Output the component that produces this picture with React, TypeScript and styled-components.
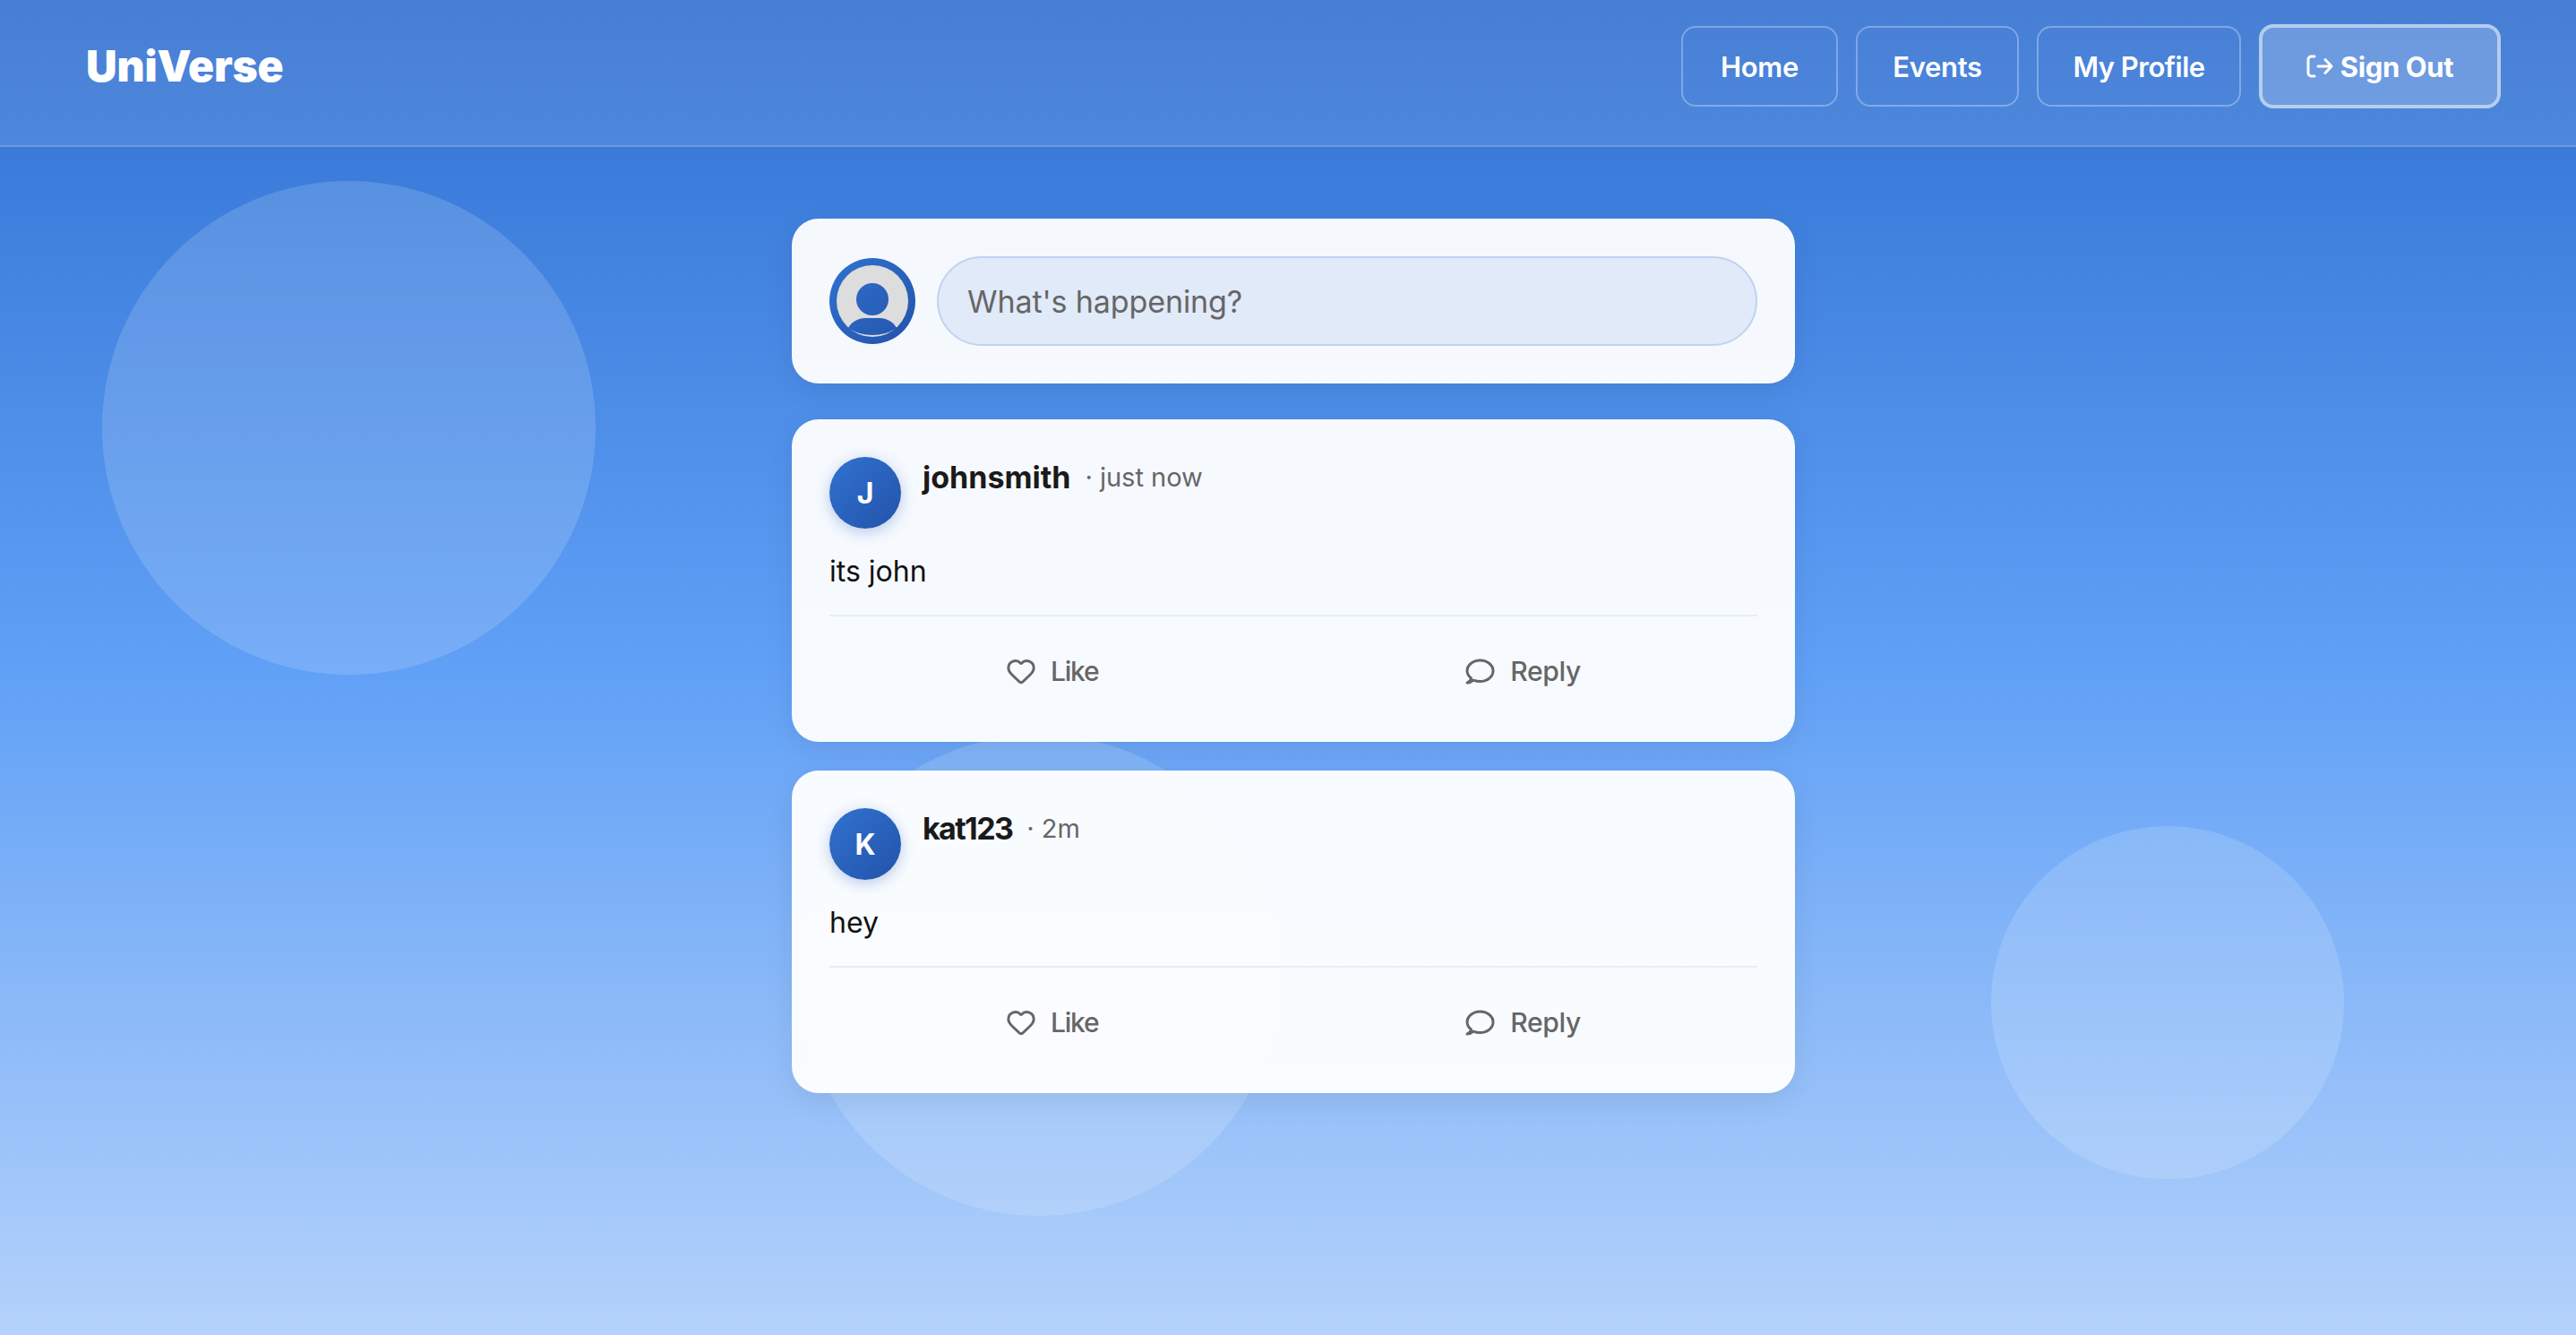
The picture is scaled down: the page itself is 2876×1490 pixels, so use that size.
import React from 'react';
import styled, { createGlobalStyle } from 'styled-components';
import { Heart } from 'lucide-react';

const Global = createGlobalStyle`
  html, body { margin: 0; padding: 0; overflow: hidden; height: 100%; }
  * { box-sizing: border-box; }
  body { font-family: Inter, "Noto Sans", "Liberation Sans", sans-serif; }
`;

const Page = styled.div`
  position: relative;
  width: calc(100vw + 12px);
  height: 100vh;
  overflow: hidden;
  background: linear-gradient(180deg, #3878d8 0%, #3a7bda 11%, #60a0f6 50%, #b4d2fb 100%);
`;

const Orb = styled.div<{ $x: number; $y: number; $d: number }>`
  position: absolute;
  left: ${p => p.$x}px;
  top: ${p => p.$y}px;
  width: ${p => p.$d}px;
  height: ${p => p.$d}px;
  border-radius: 50%;
  background: rgba(255, 255, 255, 0.15);
`;

const Nav = styled.header`
  position: relative;
  display: flex;
  align-items: center;
  justify-content: space-between;
  height: 164px;
  padding: 0 96px 14px;
  background: linear-gradient(180deg, #477ed5, #4d88dc);
  border-bottom: 2px solid rgba(255, 255, 255, 0.2);
`;

const Logo = styled.div`
  font-size: 48px;
  font-weight: 900;
  line-height: 60px;
  letter-spacing: -0.2px;
  color: #fff;
`;

const NavLinks = styled.nav`
  display: flex;
  align-items: center;
  gap: 20px;
`;

const NavButton = styled.button<{ $w: number; $track: number }>`
  width: ${p => p.$w}px;
  height: 90px;
  padding: 0;
  border: 2px solid rgba(255, 255, 255, 0.3);
  border-radius: 16px;
  background: transparent;
  color: #fff;
  font: 600 31px/1 Inter, sans-serif;
  letter-spacing: ${p => p.$track}px;
`;

const SignOut = styled.button`
  display: flex;
  align-items: center;
  justify-content: center;
  gap: 8px;
  width: 270px;
  height: 94px;
  padding: 0;
  border: 4px solid rgba(255, 255, 255, 0.5);
  border-radius: 16px;
  background: rgba(255, 255, 255, 0.2);
  color: #fff;
  font: 700 31px/1 Inter, sans-serif;
  letter-spacing: -0.4px;
`;

const Feed = styled.main`
  position: relative;
  display: flex;
  flex-direction: column;
  width: 1120px;
  margin: 80px auto 0;
`;

const Card = styled.section<{ $gap: number }>`
  margin-bottom: ${p => p.$gap}px;
  padding: 40px;
  border: 2px solid rgba(255, 255, 255, 0.2);
  border-radius: 30px;
  background: rgba(255, 255, 255, 0.95);
  box-shadow: 0 8px 32px rgba(0, 0, 0, 0.08);
`;

const Composer = styled.div`
  display: flex;
  align-items: center;
  gap: 24px;
`;

const ComposerInput = styled.input`
  flex: 1;
  height: 100px;
  padding: 0 32px;
  border: 2px solid #bfd3ef;
  border-radius: 50px;
  background: #e1eaf8;
  font: 400 34px Inter, sans-serif;
  letter-spacing: -0.1px;
  outline: none;
  &::placeholder { color: #666; opacity: 1; }
`;

const PostHeader = styled.div`
  display: flex;
  gap: 24px;
`;

const Avatar = styled.div`
  display: flex;
  align-items: center;
  justify-content: center;
  flex: none;
  width: 80px;
  height: 80px;
  border-radius: 50%;
  background: linear-gradient(135deg, #3072d0, #2353aa);
  box-shadow: 0 4px 16px rgba(36, 86, 174, 0.3);
  color: #fff;
  font-size: 32px;
  font-weight: 700;
`;

const Meta = styled.div`
  display: flex;
  align-self: flex-start;
  align-items: center;
  gap: 16px;
  line-height: 46px;
`;

const Name = styled.span<{ $track: number }>`
  font-size: 34px;
  font-weight: 700;
  letter-spacing: ${p => p.$track}px;
  color: #1a1a1a;
`;

const Time = styled.span`
  font-size: 29px;
  color: #666;
`;

const Body = styled.p`
  margin: 24px 0;
  font-size: 32px;
  line-height: 48px;
  color: #111;
`;

const Actions = styled.div`
  display: flex;
  justify-content: space-between;
  height: 100px;
  padding: 42px 197px 0;
  border-top: 2px solid #e6edf7;
`;

const Action = styled.button<{ $gap: number; $track: number }>`
  display: flex;
  align-items: center;
  gap: ${p => p.$gap}px;
  height: 38px;
  padding: 0;
  border: 0;
  background: none;
  color: #666;
  font: 500 30px/38px Inter, sans-serif;
  letter-spacing: ${p => p.$track}px;
`;

const posts = [
  { letter: 'J', name: 'johnsmith', nameTrack: 0, time: '· just now', text: 'its john', gap: 32 },
  { letter: 'K', name: 'kat123', nameTrack: -1.6, time: '· 2m', text: 'hey', gap: 0 },
];

const links = [
  { label: 'Home', w: 175, track: -0.3 },
  { label: 'Events', w: 182, track: -0.3 },
  { label: 'My Profile', w: 228, track: -0.5 },
];

const ProfileIcon = () => (
  <svg width="96" height="96" viewBox="0 0 96 96" style={{ flex: 'none' }}>
    <defs>
      <linearGradient id="ring" gradientUnits="userSpaceOnUse" x1="0" y1="0" x2="96" y2="96">
        <stop offset="0" stopColor="#3072d0" />
        <stop offset="1" stopColor="#2353aa" />
      </linearGradient>
    </defs>
    <circle cx="48" cy="48" r="48" fill="url(#ring)" />
    <circle cx="48" cy="48" r="40" fill="#ddd" />
    <circle cx="48" cy="46" r="18" fill="url(#ring)" />
    <path d="M21 78C25 71 32 67 40 67H56C64 67 71 71 75 78C68 83 58 86 48 86C38 86 28 83 21 78Z" fill="url(#ring)" />
  </svg>
);

const LogoutIcon = () => (
  <svg width="30" height="26" viewBox="0 0 30 26" fill="none" stroke="#fff" strokeWidth="3" strokeLinecap="round" strokeLinejoin="round">
    <path d="M9 2H5.5A3.5 3.5 0 0 0 2 5.5v15A3.5 3.5 0 0 0 5.5 24H9" />
    <path d="M13 13h15M21 5.5l7 7.5-7 7.5" />
  </svg>
);

const BubbleIcon = () => (
  <svg width="33" height="29" viewBox="0 0 33 29" fill="none" stroke="currentColor" strokeWidth="3" strokeLinejoin="round">
    <path d="M6.5 22C3.5 19.600 2 16.800 2 13.800C2 7.300 8.500 2 16.500 2S31 7.300 31 13.800S24.500 25.600 16.500 25.600C13.800 25.600 11.300 25.100 9 24.200C7 26 4.500 27 2 27C4.500 25.800 6.200 24 6.500 22Z" />
  </svg>
);

export default function App() {
  return (
    <Page>
      <Global />
      <Orb $x={114} $y={202} $d={551} />
      <Orb $x={2223} $y={922} $d={394} />
      <Orb $x={892} $y={820} $d={537} />
      <Nav>
        <Logo>UniVerse</Logo>
        <NavLinks>
          {links.map(l => (
            <NavButton key={l.label} $w={l.w} $track={l.track}>{l.label}</NavButton>
          ))}
          <SignOut><LogoutIcon />Sign Out</SignOut>
        </NavLinks>
      </Nav>
      <Feed>
        <Card $gap={40}>
          <Composer>
            <ProfileIcon />
            <ComposerInput placeholder="What's happening?" />
          </Composer>
        </Card>
        {posts.map(p => (
          <Card key={p.name} $gap={p.gap}>
            <PostHeader>
              <Avatar>{p.letter}</Avatar>
              <Meta>
                <Name $track={p.nameTrack}>{p.name}</Name>
                <Time>{p.time}</Time>
              </Meta>
            </PostHeader>
            <Body>{p.text}</Body>
            <Actions>
              <Action $gap={16} $track={-1.2}><Heart size={34} strokeWidth={2.1} />Like</Action>
              <Action $gap={17} $track={-0.3}><BubbleIcon />Reply</Action>
            </Actions>
          </Card>
        ))}
      </Feed>
    </Page>
  );
}
